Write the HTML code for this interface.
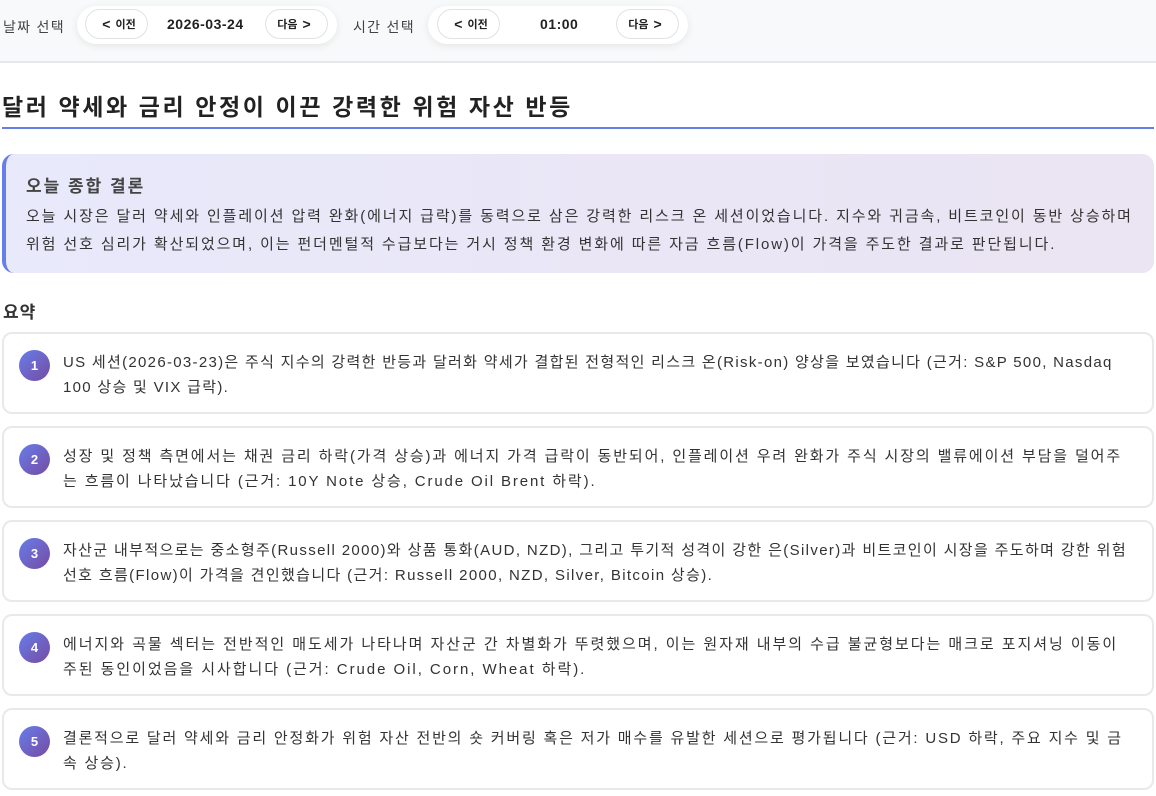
<!DOCTYPE html>
<html><head><meta charset="utf-8"><style>
*{box-sizing:border-box;margin:0;padding:0}
body{width:1156px;height:796px;overflow:hidden;background:#fff;font-family:"Liberation Sans","Noto Sans CJK KR",sans-serif;color:#333}
.top{position:relative;height:63px;background:#f8f9fa;border-bottom:2px solid #e5e7eb}
.lbl{position:absolute;top:17px;font-size:14px;color:#444;letter-spacing:1.3px}
.grp{position:absolute;top:6px;background:#fff;border-radius:22px;height:38px;box-shadow:0 2px 8px rgba(0,0,0,.08)}
.btn{position:absolute;top:3px;border:1px solid #e2e2e2;border-radius:16px;height:30px;width:63px;display:flex;align-items:center;justify-content:center;font-size:11px;font-weight:bold;color:#222;background:#fff}
.btn b{font-size:14px;margin:0 5px}
.val{position:absolute;top:10px;font-size:14px;font-weight:bold;color:#222;letter-spacing:0.5px}
h1{position:absolute;left:2px;top:88px;font-size:23px;font-weight:bold;color:#222;letter-spacing:2.6px}
.ul{position:absolute;left:2px;top:127px;width:1152px;height:2px;background:#667eea}
.concl{position:absolute;left:2px;top:154px;width:1152px;height:119px;border-radius:12px;border-left:4px solid #667eea;background:linear-gradient(90deg,#e8e9fb,#ebe4f2);padding:18px 0 0 20px}
.concl h3{font-size:17px;color:#444;margin-bottom:6px;letter-spacing:2px}
.concl p{font-size:15px;line-height:28px;color:#333;letter-spacing:1.88px;white-space:nowrap}
.sum{position:absolute;left:3px;top:298px;font-size:17px;font-weight:bold;color:#333;letter-spacing:1px}
.card{position:absolute;left:2px;width:1152px;height:82px;border:2px solid #e9e9ec;border-radius:10px;padding:16px 0 0 59px;font-size:15px;line-height:25px;color:#333;letter-spacing:1.05px;white-space:nowrap}
.n{position:absolute;left:15px;top:16px;width:31px;height:31px;border-radius:50%;background:linear-gradient(135deg,#667eea,#764ba2);color:#fff;font-size:13px;font-weight:bold;display:flex;align-items:center;justify-content:center;letter-spacing:0}
</style></head><body>
<div class="top">
<span class="lbl" style="left:3px">날짜 선택</span>
<div class="grp" style="left:77px;width:260px"><div class="btn" style="left:8px"><b>&lt;</b>이전</div><div class="val" style="left:90px">2026-03-24</div><div class="btn" style="left:188px">다음<b>&gt;</b></div></div>
<span class="lbl" style="left:353px">시간 선택</span>
<div class="grp" style="left:428px;width:260px"><div class="btn" style="left:9px"><b>&lt;</b>이전</div><div class="val" style="left:112px">01:00</div><div class="btn" style="left:188px">다음<b>&gt;</b></div></div>
</div>
<h1>달러 약세와 금리 안정이 이끈 강력한 위험 자산 반등</h1>
<div class="ul"></div>
<div class="concl"><h3>오늘 종합 결론</h3><p>오늘 시장은 달러 약세와 인플레이션 압력 완화(에너지 급락)를 동력으로 삼은 강력한 리스크 온 세션이었습니다. 지수와 귀금속, 비트코인이 동반 상승하며<br>위험 선호 심리가 확산되었으며, 이는 펀더멘털적 수급보다는 거시 정책 환경 변화에 따른 자금 흐름(Flow)이 가격을 주도한 결과로 판단됩니다.</p></div>
<div class="sum">요약</div>
<div class="card" style="top:332px;letter-spacing:1.3px"><div class="n">1</div>US 세션(2026-03-23)은 주식 지수의 강력한 반등과 달러화 약세가 결합된 전형적인 리스크 온(Risk-on) 양상을 보였습니다 (근거: S&amp;P 500, Nasdaq<br>100 상승 및 VIX 급락).</div>
<div class="card" style="top:426px;letter-spacing:1.87px"><div class="n">2</div>성장 및 정책 측면에서는 채권 금리 하락(가격 상승)과 에너지 가격 급락이 동반되어, 인플레이션 우려 완화가 주식 시장의 밸류에이션 부담을 덜어주<br>는 흐름이 나타났습니다 (근거: 10Y Note 상승, Crude Oil Brent 하락).</div>
<div class="card" style="top:520px;letter-spacing:1.36px"><div class="n">3</div>자산군 내부적으로는 중소형주(Russell 2000)와 상품 통화(AUD, NZD), 그리고 투기적 성격이 강한 은(Silver)과 비트코인이 시장을 주도하며 강한 위험<br>선호 흐름(Flow)이 가격을 견인했습니다 (근거: Russell 2000, NZD, Silver, Bitcoin 상승).</div>
<div class="card" style="top:614px;letter-spacing:1.95px"><div class="n">4</div>에너지와 곡물 섹터는 전반적인 매도세가 나타나며 자산군 간 차별화가 뚜렷했으며, 이는 원자재 내부의 수급 불균형보다는 매크로 포지셔닝 이동이<br>주된 동인이었음을 시사합니다 (근거: Crude Oil, Corn, Wheat 하락).</div>
<div class="card" style="top:708px;letter-spacing:1.79px"><div class="n">5</div>결론적으로 달러 약세와 금리 안정화가 위험 자산 전반의 숏 커버링 혹은 저가 매수를 유발한 세션으로 평가됩니다 (근거: USD 하락, 주요 지수 및 금<br>속 상승).</div>
</body></html>
